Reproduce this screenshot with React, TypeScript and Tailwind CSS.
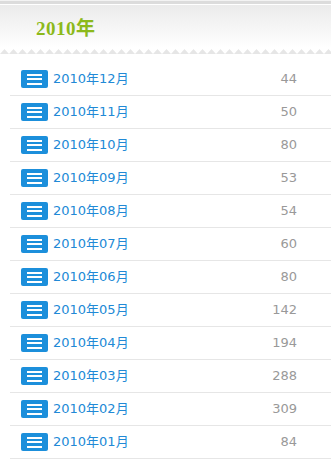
const MONTHS = [
  { label: '2010年12月', count: 44 },
  { label: '2010年11月', count: 50 },
  { label: '2010年10月', count: 80 },
  { label: '2010年09月', count: 53 },
  { label: '2010年08月', count: 54 },
  { label: '2010年07月', count: 60 },
  { label: '2010年06月', count: 80 },
  { label: '2010年05月', count: 142 },
  { label: '2010年04月', count: 194 },
  { label: '2010年03月', count: 288 },
  { label: '2010年02月', count: 309 },
  { label: '2010年01月', count: 84 },
];

function MenuIcon() {
  return (
    <span className="flex h-[18px] w-[27px] shrink-0 flex-col items-center justify-center gap-[2.5px] rounded-[2px] bg-[#1c8fdb]">
      <span className="h-[2px] w-[15px] bg-white" />
      <span className="h-[2px] w-[15px] bg-white" />
      <span className="h-[2px] w-[15px] bg-white" />
    </span>
  );
}

export default function App() {
  return (
    <div className="w-[331px] min-h-[466px] bg-white font-['DejaVu_Sans','Noto_Sans_CJK_SC',sans-serif]">
      {/* header */}
      <div className="border-t-[1px] border-[#f3f3f3]">
        <div className="h-[3px] bg-[#dcdcdc]" />
        <div className="h-[1px] bg-white" />
        <div className="flex h-[43px] items-center bg-gradient-to-b from-[#ebebeb] to-white pl-[36px]">
          <h2 className="mt-[5px] font-['Liberation_Serif','Noto_Sans_CJK_SC',serif] text-[19px] font-bold tracking-[0.5px] text-[#8cb91b]">
            2010年
          </h2>
        </div>
        <svg width="331" height="6" className="block">
          <defs>
            <pattern id="zig" width="9" height="6" patternUnits="userSpaceOnUse">
              <polygon points="0,6 4.5,1 9,6" fill="#e6e6e6" />
            </pattern>
          </defs>
          <rect width="331" height="6" fill="url(#zig)" />
        </svg>
        <div className="h-[9px]" />
      </div>

      {/* archive list */}
      <ul className="ml-[10px]">
        {MONTHS.map((m) => (
          <li
            key={m.label}
            className="flex h-[33px] items-center border-b border-[#e6e6e6] pl-[11px] pr-[34px]"
          >
            <MenuIcon />
            <a className="ml-[5px] text-[13px] text-[#2189d6]">{m.label}</a>
            <span className="ml-auto text-[13px] text-[#999]">{m.count}</span>
          </li>
        ))}
      </ul>
    </div>
  );
}
